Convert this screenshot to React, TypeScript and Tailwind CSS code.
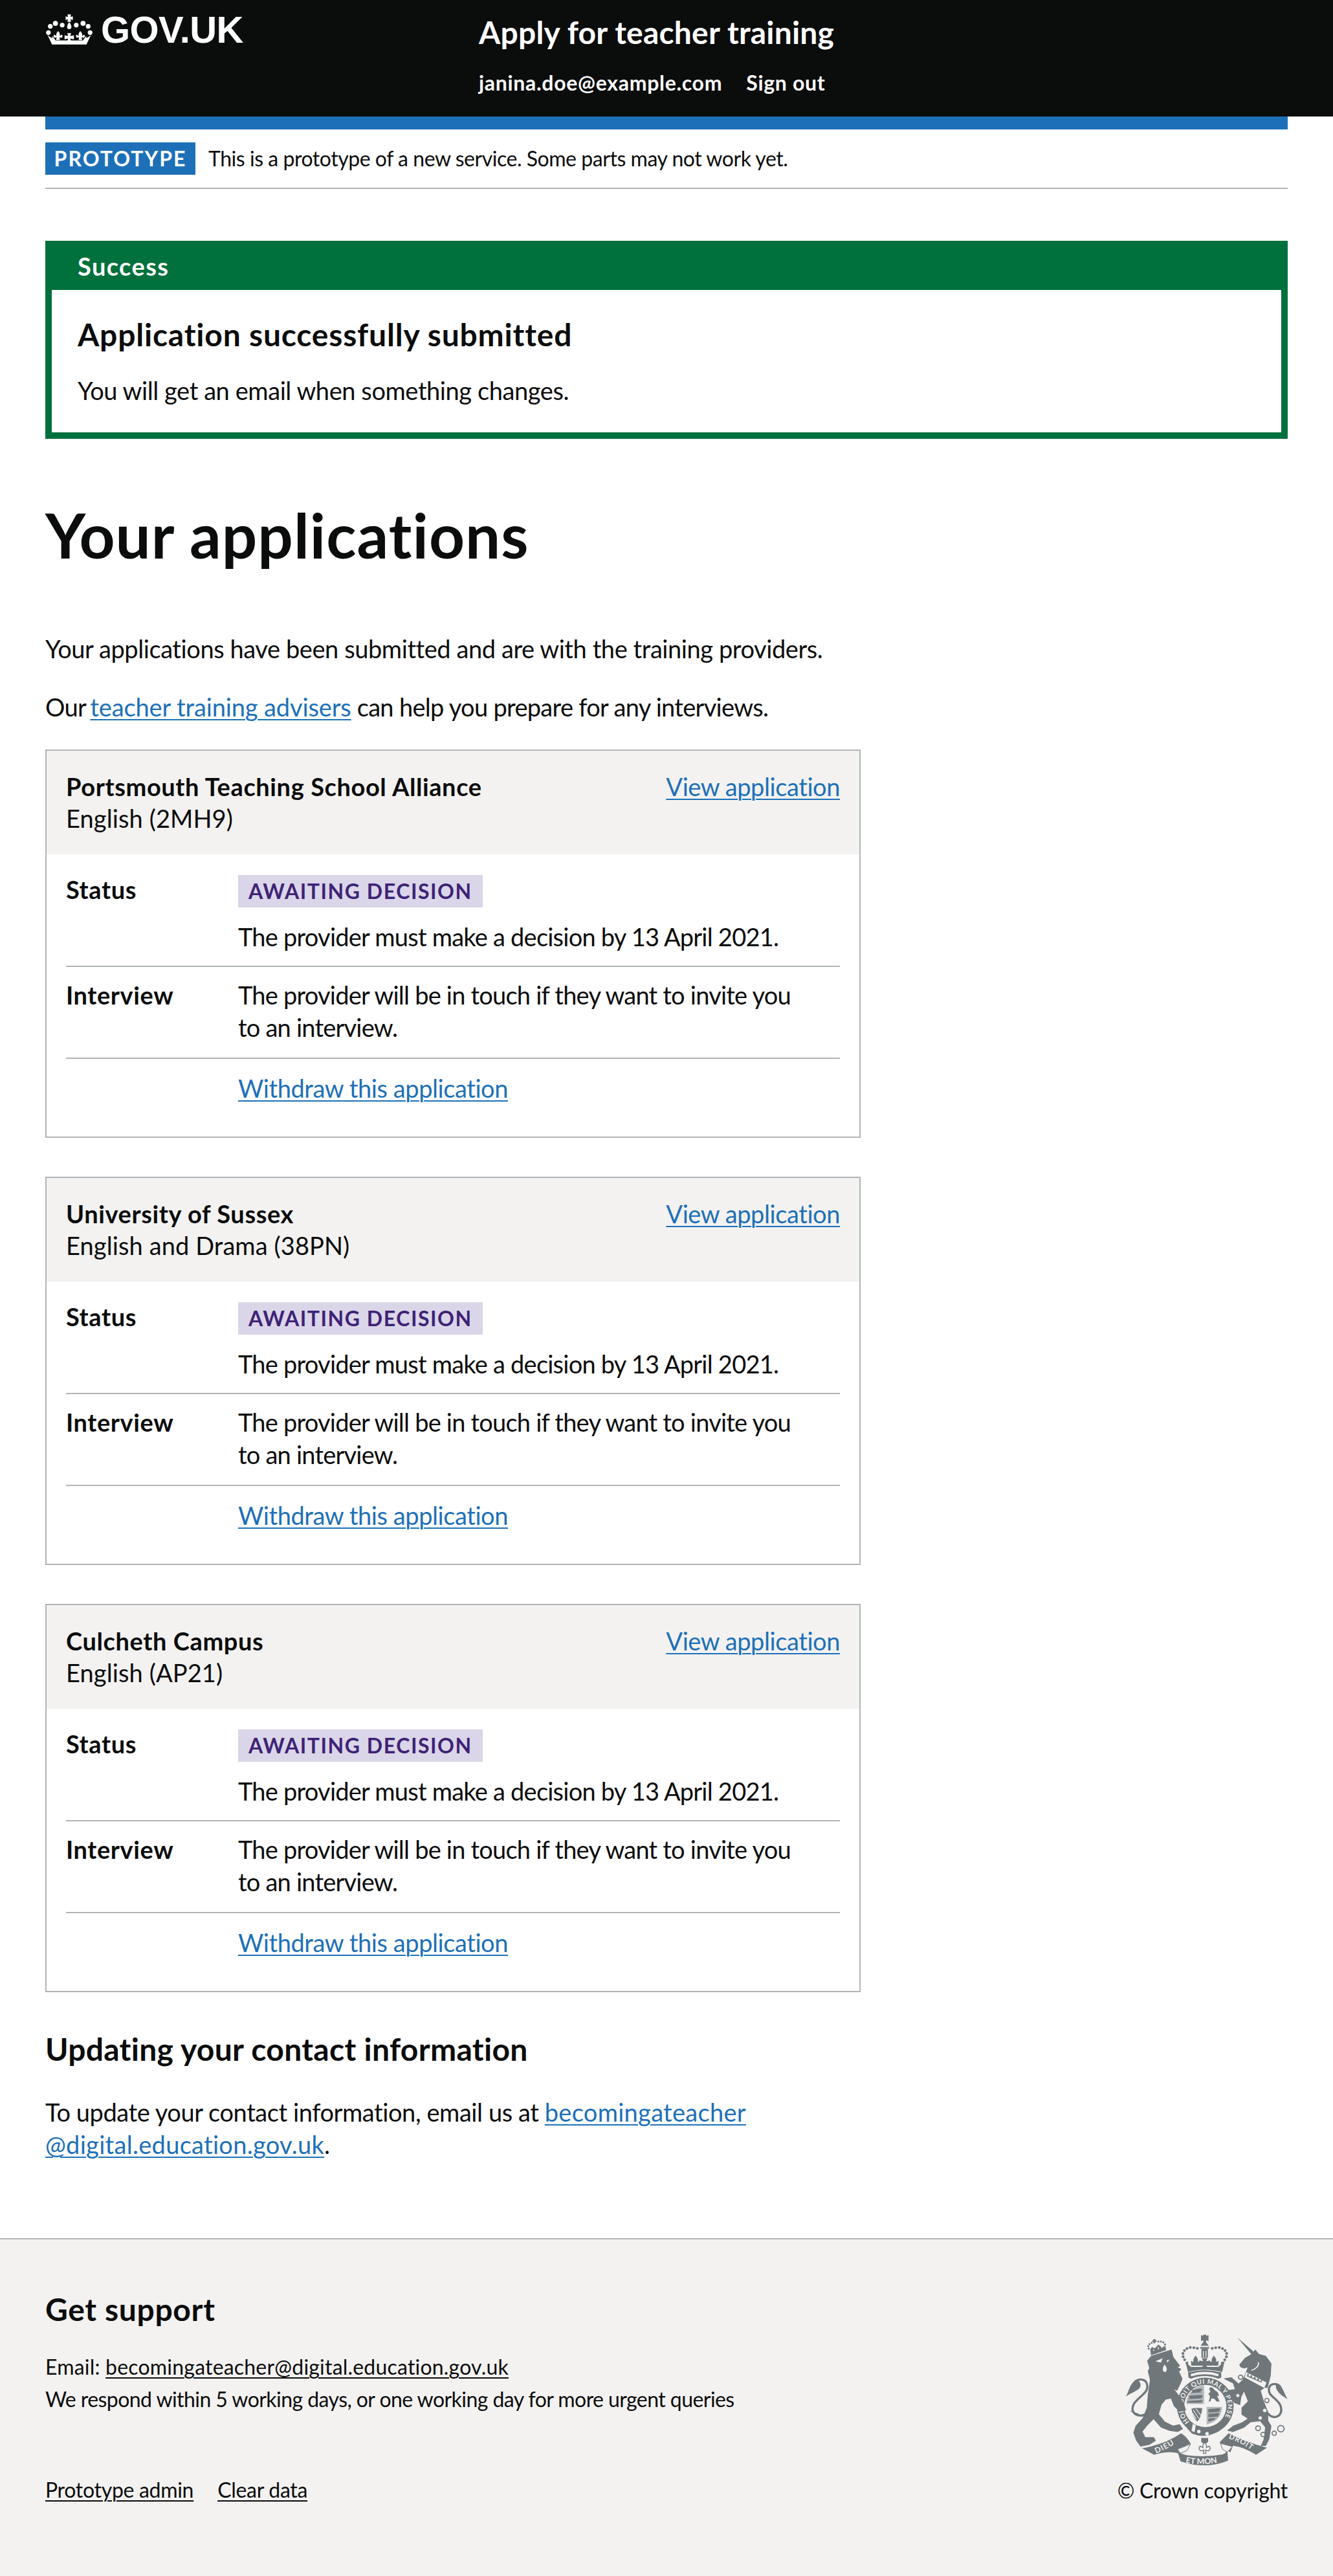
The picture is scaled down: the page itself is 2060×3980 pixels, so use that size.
const bodySize = "text-[38px] leading-[50px]"
const labelClass = "text-[38px] leading-[50px] font-bold tracking-[0.6px] w-[266px] shrink-0"
const linkClass = "text-[#1d70b8] underline decoration-2 underline-offset-[4px]"
const footerLink = "underline decoration-2 underline-offset-[4px]"

const applications = [
  { provider: "Portsmouth Teaching School Alliance", course: "English (2MH9)" },
  { provider: "University of Sussex", course: "English and Drama (38PN)" },
  { provider: "Culcheth Campus", course: "English (AP21)" },
]

function Crown() {
  return (
    <svg viewBox="8 10 224 146" className="w-[74px] h-[48px] shrink-0" fill="#ffffff">
      <path d="M112 14h16l-2 12 11-3v17l-11-3 3 12h-18l3-12-11 3V23l11 3z" />
      <path d="M120 50c7 9 10 16 10 23a10 10 0 0 1-20 0c0-7 3-14 10-23z" />
      <circle cx="87" cy="64" r="11" />
      <circle cx="153" cy="64" r="11" />
      <circle cx="55" cy="56" r="12" />
      <circle cx="185" cy="56" r="12" />
      <circle cx="31" cy="70" r="11" />
      <circle cx="209" cy="70" r="11" />
      <circle cx="22" cy="99" r="11" />
      <circle cx="218" cy="99" r="11" />
      <path d="M68 92c7 7 10 14 7 23l11-6c4 5 3 14-5 15l-7-4 2 14H58l3-14-8 4c-7-1-8-10-4-15l11 6c-3-9 1-16 8-23z" />
      <path d="M172 92c7 7 11 14 8 23l11-6c4 5 3 14-5 15l-8-4 3 14h-17l2-14-7 4c-8-1-9-10-5-15l11 6c-3-9 0-16 7-23z" />
      <path d="M111 102h18l-4 14 17-4v19l-17-4 4 14h-18l4-14-17 4v-19l17 4z" />
      <path d="M18 110l14 12 9 2-1-10 16 22h128l16-22-1 10 9-2 14-12-21 45H39z" />
    </svg>
  )
}

function Crest() {
  const ink = "#6f777b"
  const paper = "#f3f2f1"
  const shade = "#b4b8b9"
  return (
    <svg viewBox="222 140 750 610" className="w-[250px] h-[203px]">
      <defs>
        <path id="garter" d="M516 545A104 104 0 1 1 650 557" />
        <path id="dieu" d="M362 692Q420 668 468 634" />
        <path id="etmon" d="M498 735Q585 752 678 728" />
        <path id="droit" d="M698 622Q760 642 826 692" />
      </defs>

      {/* lion tail */}
      <path d="M322 505C280 530 236 508 258 462C282 425 328 412 320 372C314 345 282 342 262 360" fill="none" stroke={ink} strokeWidth="10" />
      <path d="M268 350C244 362 236 396 222 428C242 412 262 408 282 392C296 378 290 352 268 350Z" fill={ink} />
      <path d="M240 492C256 506 272 516 296 520L282 508Z" fill={ink} />

      {/* unicorn tail */}
      <path d="M880 505C905 540 955 520 940 472C925 432 878 428 886 388C894 362 928 366 940 386" fill="none" stroke={ink} strokeWidth="10" />
      <path d="M925 366C948 378 956 412 972 440C950 426 936 418 924 400C914 382 916 366 925 366Z" fill={ink} />

      {/* central crown */}
      <path d="M570 142l10 4 1-7h12l1 7 11-4v28l-11-4-1 8h-12l-1-8-10 4z" fill={ink} />
      <path d="M587 166L606 192H568Z" fill={ink} />
      <path d="M572 205h30v42h-30z" fill={ink} />
      <path d="M581 216v28M593 216v28" stroke={paper} strokeWidth="4" />
      <path d="M566 198h42v7h-42z" fill={ink} />
      {[[505, 272], [494, 257], [487, 243], [486, 228], [493, 214], [505, 205], [520, 200], [537, 201], [553, 204], [669, 272], [680, 257], [688, 243], [689, 228], [682, 214], [670, 205], [655, 200], [638, 201], [622, 204]].map(([cx, cy]) => (
        <circle key={`${cx}-${cy}`} cx={cx} cy={cy} r="6.5" fill={ink} />
      ))}
      <path d="M545 238c9 10 13 20 10 30l12-6-2 22h-40l-2-22 12 6c-3-10 1-20 10-30zM630 238c9 10 13 20 10 30l12-6-2 22h-40l-2-22 12 6c-3-10 1-20 10-30z" fill={ink} />
      <path d="M574 250h26l-6 14 18-4v24h-18l6 6h-26l6-6h-18v-24l18 4z" fill={ink} />
      <path d="M498 268L524 290H650L680 262L668 314Q587 292 510 314Z" fill={ink} />
      <path d="M510 316Q587 294 664 316L664 340L650 345Q587 320 524 345L512 340Z" fill={ink} />
      <path d="M522 323Q587 303 652 323L650 334Q587 314 524 334Z" fill={paper} />

      {/* garter and shield */}
      <circle cx="590" cy="472" r="132" fill={ink} />
      <circle cx="590" cy="472" r="98" fill={paper} />
      <text fontFamily="Lato, sans-serif" fontWeight="700" fontSize="30" fill={paper} letterSpacing="2">
        <textPath href="#garter">HONI SOIT QUI MAL Y PENSE</textPath>
      </text>
      <path d="M502 462C502 420 535 382 584 376V462Z" fill={shade} />
      <path d="M596 376C645 382 676 420 676 462H596Z" fill={paper} />
      <path d="M510 476H584V554C545 545 512 525 510 476Z" fill={paper} />
      <path d="M596 476H668C665 525 635 548 596 558Z" fill={shade} />
      <path d="M525 398l44-8 8 6-10 8 6 4-52 4 10-6zM510 424l62-4 8 8-10 6 6 2-66 4 8-8zM506 448l68-4 4 6-8 6h-62z" fill={ink} />
      <path d="M612 384l14 4 6 8 16 12 6 18-10-2 8 16 4 12-14-2-10-12-14-2-4 14h-8l6-22-8-14 10-8-6-14z" fill={ink} />
      <path d="M526 484Q552 478 576 482Q572 525 552 544Q530 520 526 484Z" fill={ink} />
      <path d="M534 490L560 530M546 484L570 516M530 504L548 532" stroke={paper} strokeWidth="3.5" />
      <path d="M604 486l50-4 8 6-10 6 6 4-54 4zM604 508l48-4 4 8-8 4 4 4-48 4zM604 530l34-2-6 8-6 2-22 6z" fill={ink} />
      <path d="M505 575Q525 555 540 560Q600 590 672 548L655 588Q590 625 528 600Z" fill={ink} />
      <circle cx="560" cy="590" r="8" fill={paper} />
      <circle cx="598" cy="600" r="8" fill={paper} />
      <path d="M532 555l14 6-6 32-14-6z" fill={paper} />

      {/* lion */}
      <path d="M322 262L340 240L432 212L440 245L470 285L458 292L476 300L466 312L482 345L476 362L458 398L438 386L470 430L492 470L498 490L470 496L445 470L432 435L405 440L385 465L372 510L400 545L440 565L470 558L484 578L462 590L425 585L385 570L350 530L320 560L296 590L310 618L350 618L358 632L330 650L290 658L270 630L258 595L268 565L300 530L320 480L325 420L335 350L325 310L332 296Z" fill={ink} stroke={ink} strokeWidth="4" strokeLinejoin="round" />
      <path d="M358 264L392 250L384 270ZM400 280C412 290 416 308 404 314C392 316 388 296 400 280ZM410 260L424 256L414 270Z" fill={paper} />

      {/* lion crown */}
      <path d="M338 236L408 212L404 192L388 200L372 186L356 204L342 198L334 208Z" fill={ink} />
      <path d="M349 180v-6h-5v-8h5v-5h9v5h5v8h-5v6z" fill={ink} />
      <path d="M347 216l3-10 3 9zM368 208l4-12 4 11zM386 202l3-8 3 7z" fill={paper} />
      {[[327, 205], [325, 194], [331, 184], [341, 178], [372, 172], [384, 172], [395, 176], [403, 186]].map(([cx, cy]) => (
        <circle key={`${cx}-${cy}`} cx={cx} cy={cy} r="4.5" fill={ink} />
      ))}

      {/* unicorn */}
      <path d="M738 153L820 224L806 234Z" fill={ink} />
      <path d="M750 280L775 250L810 230L822 212L838 232L870 240L895 275L892 330L878 385L865 385L845 400L860 450L880 500L880 540L895 565L885 625L870 655L850 655L862 630L870 570L845 540L800 545L770 570L720 590L695 585L720 565L760 550L790 530L760 510L760 480L790 450L770 400L755 430L750 465L725 455L695 400L730 395L720 365L680 345L710 340L745 370L765 350L778 320L790 290L770 295L755 290Z" fill={ink} stroke={ink} strokeWidth="4" strokeLinejoin="round" />
      <path d="M780 314L874 362L864 388L772 338Z" fill={paper} />
      <path d="M784 332l2-12 6 3-1 9 8 4 2-8 6 3v8l8 4 2-8 6 3v8l8 4 2-8 6 3v8l8 4 3-8 4 2-3 12-6-2-64-28z" fill={ink} />
      <path d="M836 268C840 285 826 300 804 306" fill="none" stroke={paper} strokeWidth="5" />
      <circle cx="845" cy="527" r="8" fill={paper} />
      <circle cx="866" cy="492" r="8" fill={paper} />
      {[[876, 446, 10], [754, 338, 10], [741, 423, 10], [835, 575, 11], [858, 604, 10], [910, 598, 10], [941, 577, 15]].map(([cx, cy, r]) => (
        <circle key={`${cx}-${cy}`} cx={cx} cy={cy} r={r} fill={paper} stroke={ink} strokeWidth="5" />
      ))}

      {/* motto */}
      <path d="M296 668Q400 650 478 598Q505 615 522 646C500 655 478 665 462 670L468 692Q420 678 352 698Z" fill={ink} />
      <path d="M462 672L522 648L505 678L472 692Z" fill={paper} stroke={ink} strokeWidth="3" />
      <path d="M656 640L698 598Q780 640 876 665L826 698Q770 662 718 656L706 688Z" fill={ink} />
      <path d="M660 645L716 660L692 686L670 672Z" fill={paper} stroke={ink} strokeWidth="3" />
      <path d="M460 680Q480 695 500 700Q590 712 672 696Q685 690 692 680L696 725Q590 768 475 728Z" fill={ink} />
      <text fontFamily="Lato, sans-serif" fontWeight="700" fontSize="36" fill={paper} letterSpacing="3">
        <textPath href="#dieu">DIEU</textPath>
      </text>
      <text fontFamily="Lato, sans-serif" fontWeight="700" fontSize="38" fill={paper}>
        <textPath href="#etmon">ET MON</textPath>
      </text>
      <text fontFamily="Lato, sans-serif" fontWeight="700" fontSize="34" fill={paper} letterSpacing="3">
        <textPath href="#droit">DROIT</textPath>
      </text>
      <path d="M571 620h32v18l-16 12-16-12z" fill={ink} />
      <path d="M587 640c8 10 10 18 8 24l13-6c9 8 5 22-8 22l-9-4 2 16h-12l2-16-9 4c-13 0-17-14-8-22l13 6c-2-6 0-14 8-24z" fill={paper} stroke={ink} strokeWidth="4" />
    </svg>
  )
}

function ApplicationCard({ provider, course }: { provider: string; course: string }) {
  return (
    <div className="border-2 border-[#b1b4b6] mb-[60px] last:mb-0">
      <div className="bg-[#f3f2f1] flex justify-between p-[30px]">
        <div>
          <div className={`${bodySize} font-bold tracking-[0.6px]`}>{provider}</div>
          <div className={`${bodySize} tracking-[0.1px] -mt-[1px] mb-[1px]`}>{course}</div>
        </div>
        <a className={`${bodySize} tracking-[-0.42px] ${linkClass}`}>View application</a>
      </div>
      <div className="px-[30px] pt-[32px] pb-[50px]">
        <div className="flex pb-[20px] border-b-2 border-[#b1b4b6]">
          <div className={`${labelClass} -mt-[3px]`}>Status</div>
          <div>
            <span className="block w-fit h-[50px] bg-[#dbd5e9] text-[#3d2375] px-[16px] text-[32px] leading-[50px] font-bold tracking-[1.55px] uppercase">Awaiting decision</span>
            <p className={`${bodySize} tracking-[-0.77px] mt-[20px]`}>The provider must make a decision by 13 April 2021.</p>
          </div>
        </div>
        <div className="flex py-[20px] border-b-2 border-[#b1b4b6]">
          <div className={`${labelClass} -mt-[2px]`}>Interview</div>
          <p className={`${bodySize} tracking-[-0.78px] pr-[50px] -mt-[2px] mb-[2px]`}>The provider will be in touch if they want to invite you to an interview.</p>
        </div>
        <div className="flex pt-[20px]">
          <div className="w-[266px] shrink-0" />
          <a className={`${bodySize} tracking-[-0.42px] ${linkClass}`}>Withdraw this application</a>
        </div>
      </div>
    </div>
  )
}

export default function App() {
  return (
    <div className="font-[Lato,sans-serif] [font-variant-ligatures:none] text-[#0b0c0c] bg-white">
      {/* header */}
      <header className="bg-[#0b0c0c] h-[180px] px-[70px] flex text-white">
        <div className="w-[670px] flex items-start gap-[13px] pt-[21px]">
          <Crown />
          <span className="font-['Liberation_Sans',sans-serif] font-bold text-[58px] leading-[50px] tracking-[-0.6px] -ml-[1px]">GOV.UK</span>
        </div>
        <div className="pt-[20px]">
          <div className="text-[48px] leading-[60px] font-bold tracking-[0.2px]">Apply for teacher training</div>
          <div className="mt-[23px] flex gap-[37px] text-[32px] leading-[50px] font-bold tracking-[0.7px]">
            <span>janina.doe@example.com</span>
            <span>Sign out</span>
          </div>
        </div>
      </header>

      <div className="px-[70px]">
        <div className="h-[20px] bg-[#1d70b8]" />
        <div className="flex items-center gap-[20px] py-[20px] border-b-2 border-[#b1b4b6]">
          <span className="bg-[#1d70b8] text-white h-[50px] w-[232px] text-center text-[32px] leading-[50px] font-bold tracking-[2px]">PROTOTYPE</span>
          <span className="text-[32px] leading-[50px] tracking-[-0.46px]">This is a prototype of a new service. Some parts may not work yet.</span>
        </div>

        {/* success banner */}
        <div className="mt-[80px] border-[10px] border-[#00703c]">
          <div className="bg-[#00703c] text-white pl-[40px] pt-[4px] pb-[12px] text-[38px] leading-[50px] font-bold tracking-[1.4px]">Success</div>
          <div className="px-[40px] pt-[39px] pb-[40px]">
            <div className="text-[48px] leading-[60px] font-bold tracking-[0.8px]">Application successfully submitted</div>
            <p className={`${bodySize} tracking-[-0.42px] mt-[31px]`}>You will get an email when something changes.</p>
          </div>
        </div>

        <h1 className="mt-[98px] text-[96px] leading-[100px] font-bold tracking-[1.05px]">Your applications</h1>

        <div className="w-[1260px]">
          <p className={`${bodySize} tracking-[-0.42px] mt-[101px]`}>Your applications have been submitted and are with the training providers.</p>
          <p className={`${bodySize} tracking-[-0.7px] mt-[40px]`}>
            Our <a className={`${linkClass} tracking-[-0.12px] -ml-[2px]`}>teacher training advisers</a> can help you prepare for any interviews.
          </p>

          <div className="mt-[41px]">
            {applications.map((app) => (
              <ApplicationCard key={app.provider} provider={app.provider} course={app.course} />
            ))}
          </div>

          <h2 className="mt-[58px] text-[48px] leading-[60px] font-bold tracking-[0.3px]">Updating your contact information</h2>
          <p className={`${bodySize} tracking-[-0.42px] mt-[42px]`}>
            To update your contact information, email us at <a className={`${linkClass} tracking-[0.3px]`}>becomingateacher<br />@digital.education.gov.uk</a>.
          </p>
        </div>
      </div>

      {/* footer */}
      <footer className="mt-[120px] bg-[#f3f2f1] border-t-2 border-[#b1b4b6] px-[70px] h-[522px] flex justify-between">
        <div className="pt-[78px]">
          <div className="text-[48px] leading-[60px] font-bold tracking-[0.65px]">Get support</div>
          <div className="mt-[34px] text-[32px] leading-[50px] tracking-[0.2px]">
            Email: <a className={footerLink}>becomingateacher@digital.education.gov.uk</a>
          </div>
          <div className="text-[32px] leading-[50px] tracking-[-0.56px]">We respond within 5 working days, or one working day for more urgent queries</div>
          <div className="mt-[90px] flex gap-[37px] text-[32px] leading-[50px] tracking-[-0.3px]">
            <a className={footerLink}>Prototype admin</a>
            <a className={footerLink}>Clear data</a>
          </div>
        </div>
        <div className="pt-[147px] flex flex-col items-end">
          <Crest />
          <div className="mt-[13px] text-[32px] leading-[50px] tracking-[-0.3px]">© Crown copyright</div>
        </div>
      </footer>
    </div>
  )
}
